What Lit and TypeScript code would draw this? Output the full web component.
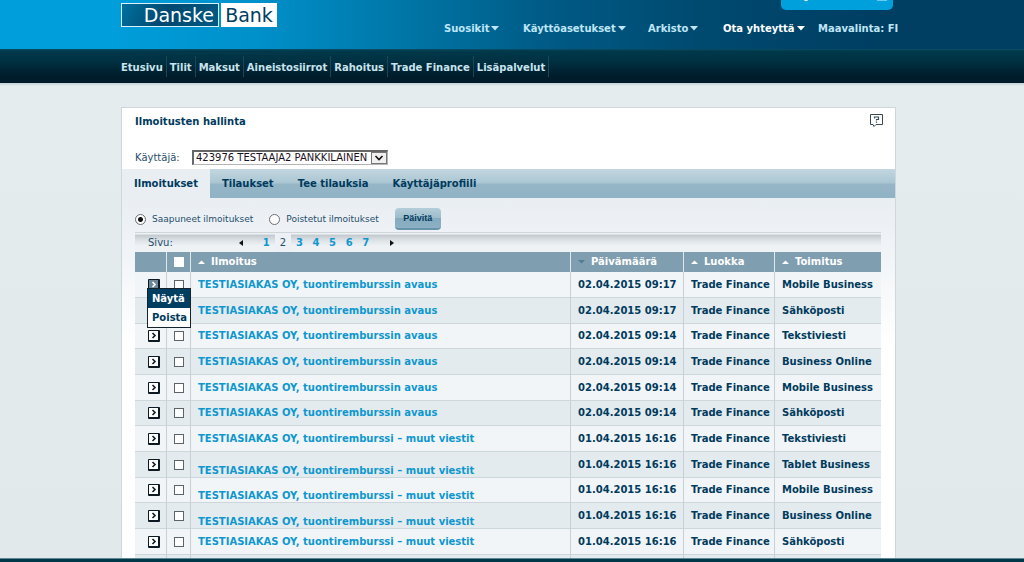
import { LitElement, html, css, svg, nothing } from "lit";
import { customElement, property, state } from "lit/decorators.js";

interface Message {
  title: string;
  date: string;
  category: string;
  delivery: string;
  low?: boolean;
}

const OPENING = "TESTIASIAKAS OY, tuontiremburssin avaus";
const OTHER = "TESTIASIAKAS OY, tuontiremburssi – muut viestit";

const message = (title: string, date: string, delivery: string, low = false): Message => ({
  title,
  date,
  category: "Trade Finance",
  delivery,
  low,
});

const MESSAGES: Message[] = [
  message(OPENING, "02.04.2015 09:17", "Mobile Business"),
  message(OPENING, "02.04.2015 09:17", "Sähköposti"),
  message(OPENING, "02.04.2015 09:14", "Tekstiviesti"),
  message(OPENING, "02.04.2015 09:14", "Business Online"),
  message(OPENING, "02.04.2015 09:14", "Mobile Business"),
  message(OPENING, "02.04.2015 09:14", "Sähköposti"),
  message(OTHER, "01.04.2015 16:16", "Tekstiviesti"),
  message(OTHER, "01.04.2015 16:16", "Tablet Business", true),
  message(OTHER, "01.04.2015 16:16", "Mobile Business", true),
  message(OTHER, "01.04.2015 16:16", "Business Online", true),
  message(OTHER, "01.04.2015 16:16", "Sähköposti"),
];

const NAV = ["Etusivu", "Tilit", "Maksut", "Aineistosiirrot", "Rahoitus", "Trade Finance", "Lisäpalvelut"];
const TABS = ["Ilmoitukset", "Tilaukset", "Tee tilauksia", "Käyttäjäprofiili"];

@customElement("bank-header")
class BankHeader extends LitElement {
  static styles = css`
    :host {
      display: block;
      flex: none;
      font: bold 10px/12px "DejaVu Sans", Verdana, sans-serif;
    }
    a {
      color: inherit;
      text-decoration: none;
    }
    .wrap {
      width: 775px;
      max-width: 100%;
      margin: 0 auto;
    }
    .top {
      height: 49px;
      padding-right: 7px;
      background: linear-gradient(90deg, #009fdc 0, #009fdc 10%, #0090ca 25%, #0077a8 39%, #005b86 53%, #004a70 68%, #003e62 86%, #003e62);
    }
    .top .wrap {
      display: flex;
      justify-content: space-between;
      height: 49px;
    }
    .logo {
      display: flex;
      gap: 2px;
      height: 24px;
      margin-top: 3px;
      font-size: 19px;
      line-height: 24px;
      font-weight: normal;
    }
    .danske {
      box-sizing: border-box;
      width: 98px;
      padding-right: 4px;
      text-align: right;
      line-height: 23px;
      color: #fff;
      border: 1px solid #d8f1fb;
      background: linear-gradient(115deg, #00719f, #00486f 45%, #005a84);
    }
    .bank {
      width: 56px;
      text-align: center;
      color: #003e62;
      background: #fff;
    }
    .side {
      display: flex;
      flex-direction: column;
      align-items: flex-end;
    }
    .logoff {
      width: 112px;
      height: 10px;
      margin: 0 3px 0 0;
      padding: 0;
      border: 0;
      border-radius: 0 0 5px 5px;
      background: #00a0dd;
      line-height: 0;
    }
    .logoff svg {
      display: block;
    }
    .tools {
      display: grid;
      grid-template-columns: 79px 125px 75px 95px 78px;
      margin-top: 13px;
      color: #bfe6f7;
      white-space: nowrap;
    }
    .tools svg {
      margin-left: 2px;
      vertical-align: 1px;
    }
    .tools .strong {
      color: #fff;
    }
    .nav {
      height: 34px;
      padding-right: 7px;
      background: linear-gradient(#0b4e68 0, #00394a 2px, #003142 12px, #001b2a 28px, #001b2a);
    }
    .nav .wrap {
      display: flex;
      padding-top: 7px;
    }
    .nav a {
      padding: 6px 3px 3px;
      border-right: 1px solid #1c4555;
      color: #c8e4ef;
    }
    .nav a:first-child {
      padding-left: 0;
    }
  `;

  private arrow() {
    return svg`<svg width="8" height="5" viewBox="0 0 8 5" aria-hidden="true"><path d="M0 0h8L4 4.5z" fill="currentColor"/></svg>`;
  }

  render() {
    return html`
      <header class="top">
        <div class="wrap">
          <a class="logo" href="#"><span class="danske">Danske</span><span class="bank">Bank</span></a>
          <div class="side">
            <button class="logoff" aria-label="Kirjaudu ulos">
              <svg width="112" height="10" viewBox="0 0 112 10" aria-hidden="true">
                <path d="M23 0q2 1.500 4 0M96 0h10" stroke="#d6f2fc" fill="none" />
              </svg>
            </button>
            <div class="tools">
              <a href="#">Suosikit${this.arrow()}</a>
              <a href="#">Käyttöasetukset${this.arrow()}</a>
              <a href="#">Arkisto${this.arrow()}</a>
              <a href="#" class="strong">Ota yhteyttä${this.arrow()}</a>
              <a href="#">Maavalinta: FI</a>
            </div>
          </div>
        </div>
      </header>
      <nav class="nav">
        <div class="wrap">${NAV.map((n) => html`<a href="#">${n}</a>`)}</div>
      </nav>
    `;
  }
}

@customElement("message-table")
class MessageTable extends LitElement {
  @property({ attribute: false }) messages: Message[] = [];

  static styles = css`
    :host {
      display: block;
    }
    table {
      width: 100%;
      table-layout: fixed;
      border-collapse: separate;
      border-spacing: 0;
      font: bold 10px/12px "DejaVu Sans", Verdana, sans-serif;
      color: #003a5d;
    }
    .c-menu { width: 32px; }
    .c-check { width: 24px; }
    .c-date { width: 113px; }
    .c-cat { width: 91px; }
    .c-del { width: 106px; }
    th,
    td {
      box-sizing: border-box;
      padding: 0 0 0 7px;
      text-align: left;
      border-right: 1px solid #c8d0d6;
      white-space: nowrap;
    }
    th {
      height: 20px;
      background: #7f9eb0;
      border-color: #dfe8ec;
      color: #fff;
    }
    th:last-child,
    td:last-child {
      border-right: 0;
    }
    td {
      height: 26px;
      border-bottom: 1px solid #cdd6db;
      background: #f2f5f8;
    }
    tr:nth-child(even) td,
    tfoot td {
      background: #e4ebee;
    }
    tr:nth-child(3n) td {
      height: 25px;
    }
    .pick {
      padding: 0;
      text-align: center;
    }
    .menu-cell {
      padding: 0 0 0 13px;
      position: relative;
    }
    .title {
      color: #0e97cf;
      text-decoration: none;
    }
    .low {
      padding-top: 12px;
    }
    .sort {
      padding: 0;
      border: 0;
      background: none;
      font: inherit;
      color: inherit;
    }
    .sort svg {
      margin-right: 6px;
      vertical-align: 1px;
    }
    input {
      appearance: none;
      display: block;
      box-sizing: border-box;
      width: 10px;
      height: 10px;
      margin: 0 auto;
      border: 1px solid #5d6469;
      background: #fff;
    }
    th input {
      border-color: #fff;
    }
    .open {
      display: block;
      width: 12px;
      height: 12px;
      padding: 0;
      border: 0;
      background: none;
    }
    .open svg {
      display: block;
    }
    .menu {
      position: absolute;
      z-index: 1;
      left: 12px;
      top: 16px;
      width: 42px;
      border: 1px solid #14222c;
      background: #fff;
    }
    .menu button {
      display: block;
      width: 100%;
      height: 19px;
      padding: 0 0 0 4px;
      border: 0;
      background: #fff;
      color: #003a5d;
      font: inherit;
      text-align: left;
    }
    .menu button.on {
      background: #003e62;
      color: #fff;
    }
  `;

  private heading(label: string, down = false) {
    return html`<button class="sort">
      <svg width="7" height="4" viewBox="0 0 7 4" aria-hidden="true">
        <path d=${down ? "M0 0h7L3.5 3.5z" : "M0 4h7L3.5 .5z"} fill=${down ? "#527a91" : "#fff"} /></svg
      >${label}
    </button>`;
  }

  private opener(active: boolean) {
    return html`<button class="open" aria-label="Toiminnot">
      <svg width="12" height="12" viewBox="0 0 12 12" aria-hidden="true">
        <rect width="12" height="12" rx="1" fill="#0d1a24" />
        <rect x="1" y="1" width="9" height="9" fill=${active ? "#6d8799" : "#fff"} />
        <path d="M4.500 3l2.500 2.500L4.500 8" fill="none" stroke-width="1.600" stroke=${active ? "#fff" : "#0d1a24"} />
      </svg>
    </button>`;
  }

  render() {
    return html`
      <table>
        <colgroup>
          <col class="c-menu" /><col class="c-check" /><col /><col class="c-date" /><col class="c-cat" /><col class="c-del" />
        </colgroup>
        <thead>
          <tr>
            <th></th>
            <th class="pick"><input type="checkbox" aria-label="Valitse kaikki" /></th>
            <th>${this.heading("Ilmoitus")}</th>
            <th>${this.heading("Päivämäärä", true)}</th>
            <th>${this.heading("Luokka")}</th>
            <th>${this.heading("Toimitus")}</th>
          </tr>
        </thead>
        <tbody>
          ${this.messages.map(
            (m, i) => html`<tr>
              <td class="menu-cell">
                ${this.opener(i === 0)}
                ${i === 0
                  ? html`<div class="menu"><button class="on">Näytä</button><button>Poista</button></div>`
                  : nothing}
              </td>
              <td class="pick"><input type="checkbox" aria-label="Valitse ilmoitus" /></td>
              <td class=${m.low ? "low" : ""}><a class="title" href="#">${m.title}</a></td>
              <td>${m.date}</td>
              <td>${m.category}</td>
              <td>${m.delivery}</td>
            </tr>`
          )}
        </tbody>
        <tfoot>
          <tr><td></td><td></td><td></td><td></td><td></td><td></td></tr>
        </tfoot>
      </table>
    `;
  }
}

@customElement("app-root")
class AppRoot extends LitElement {
  @state() private page = 2;

  static styles = css`
    :host {
      display: flex;
      flex-direction: column;
      height: 100vh;
      overflow: hidden;
      font: 10px/12px "DejaVu Sans", Verdana, sans-serif;
      color: #1f4e6b;
      background: #e2eaec;
    }
    main {
      flex: 1;
      min-height: 0;
      overflow: hidden;
      padding: 24px 7px 0 0;
      background: linear-gradient(#c3d0d5, #e4ecee 3px, #e1e9eb);
    }
    .panel {
      box-sizing: border-box;
      width: 775px;
      max-width: 100%;
      margin: 0 auto;
      border: 1px solid #cdd7dc;
      background: #fff;
    }
    .title {
      display: flex;
      justify-content: space-between;
      padding: 6px 12px 0 13px;
    }
    h1 {
      margin: 2px 0 0;
      font-size: 10px;
      line-height: 12px;
      color: #003a5d;
    }
    .help {
      padding: 0;
      border: 0;
      height: 14px;
      background: none;
    }
    .help svg {
      display: block;
    }
    .user {
      display: flex;
      align-items: center;
      padding: 22px 13px 4px;
    }
    .user label {
      width: 57px;
    }
    .select {
      display: flex;
      position: relative;
      width: 196px;
    }
    select {
      appearance: none;
      width: 196px;
      height: 15px;
      padding: 0 0 0 2px;
      border: 1px solid #b6b6b6;
      border-top: 2px solid #666;
      border-left: 2px solid #666;
      border-radius: 0;
      background: #fff;
      color: #1b1022;
      font: inherit;
      line-height: 12px;
    }
    .select svg {
      position: absolute;
      right: 1px;
      top: 2px;
      pointer-events: none;
    }
    .tabs {
      display: flex;
      height: 29px;
      background: linear-gradient(#c2d6df 0, #aac6d3 14px, #95b6c7 15px, #8fb2c4);
    }
    .tabs button {
      padding: 0 12px;
      border: 0;
      background: none;
      font: bold 10px/12px "DejaVu Sans", Verdana, sans-serif;
      color: #003a5d;
    }
    .tabs button.on {
      background: #e9eef3;
    }
    .body {
      padding: 10px 14px 20px 13px;
      background: linear-gradient(#e9eef3, #fff 150px);
    }
    .filter {
      display: flex;
      align-items: center;
      height: 22px;
      font-size: 9px;
    }
    .filter label {
      display: flex;
      align-items: center;
      gap: 6px;
      margin-right: 16px;
    }
    .filter input {
      appearance: none;
      box-sizing: border-box;
      width: 11px;
      height: 11px;
      margin: 0;
      border: 1px solid #6b6f73;
      border-radius: 50%;
      background: #fff;
    }
    .filter input:checked {
      background: radial-gradient(circle, #111 0 2px, #fff 3px);
    }
    .update {
      width: 46px;
      height: 22px;
      padding: 0;
      border: 0;
      border-bottom: 2px solid #6893ab;
      border-radius: 4px;
      background: linear-gradient(#b4cdd9, #9dbccb 50%, #86abbf 51%, #8bafc3);
      color: #003a5d;
      font: bold 9px/12px "Liberation Sans", Arial, sans-serif;
    }
    .pager {
      display: flex;
      align-items: center;
      height: 19px;
      margin-top: 2px;
      padding-left: 13px;
      border-top: 1px solid #cfd6da;
      background: linear-gradient(#f0f3f5 1px, #c3cacf 2px, #dfe4e8 8px, #eff2f5 13px);
    }
    .pager .label {
      width: 87px;
    }
    .pager button {
      padding: 0;
      border: 0;
      background: none;
      font: inherit;
    }
    .pager svg {
      display: block;
    }
    .step {
      width: 11px;
      display: flex;
      justify-content: center;
    }
    .pages {
      display: flex;
      width: 116px;
      height: 19px;
      margin: 0 12px;
    }
    .pages button {
      flex: 1;
      font-weight: bold;
      color: #0e97cf;
    }
    .pages button.on {
      font-weight: normal;
      color: #1f4e6b;
      background: #edf1f5;
    }
    footer {
      flex: none;
      height: 3px;
      border-top: 1px solid #5f8794;
      background: #00384a;
    }
  `;

  render() {
    return html`
      <bank-header></bank-header>
      <main>
        <section class="panel">
          <div class="title">
            <h1>Ilmoitusten hallinta</h1>
            <button class="help" aria-label="Ohje">
              <svg width="13" height="14" viewBox="0 0 13 14" aria-hidden="true">
                <path d="M.5.5h12v10H6l-2 2-1-2H.5z" fill="#fff" stroke="#3a4a55" />
                <path d="M4.500 4.500V3h4v2.500h-2v1M6.500 7.500v1.300" fill="none" stroke="#3a4a55" stroke-width="1.200" />
              </svg>
            </button>
          </div>
          <div class="user">
            <label for="user">Käyttäjä:</label>
            <div class="select">
              <select id="user">
                <option>423976 TESTAAJA2 PANKKILAINEN</option>
              </select>
              <svg width="16" height="12" viewBox="0 0 16 12" aria-hidden="true">
                <rect x=".5" y=".5" width="15" height="11" fill="#f0f0f0" stroke="#777" />
                <path d="M4.500 4L8 7.500 11.500 4" fill="none" stroke="#111" stroke-width="1.600" />
              </svg>
            </div>
          </div>
          <div class="tabs">${TABS.map((t, i) => html`<button class=${i === 0 ? "on" : ""}>${t}</button>`)}</div>
          <div class="body">
            <div class="filter">
              <label><input type="radio" name="box" checked />Saapuneet ilmoitukset</label>
              <label><input type="radio" name="box" />Poistetut ilmoitukset</label>
              <button class="update">Päivitä</button>
            </div>
            <div class="pager">
              <span class="label">Sivu:</span>
              <button class="step" aria-label="Edellinen">
                <svg width="4" height="6" viewBox="0 0 4 6"><path d="M4 0v6L0 3z" fill="#111" /></svg>
              </button>
              <div class="pages">
                ${[1, 2, 3, 4, 5, 6, 7].map(
                  (n) => html`<button class=${n === this.page ? "on" : ""} @click=${() => (this.page = n)}>${n}</button>`
                )}
              </div>
              <button class="step" aria-label="Seuraava">
                <svg width="4" height="6" viewBox="0 0 4 6"><path d="M0 0v6l4-3z" fill="#111" /></svg>
              </button>
            </div>
            <message-table .messages=${MESSAGES}></message-table>
          </div>
        </section>
      </main>
      <footer></footer>
    `;
  }
}
